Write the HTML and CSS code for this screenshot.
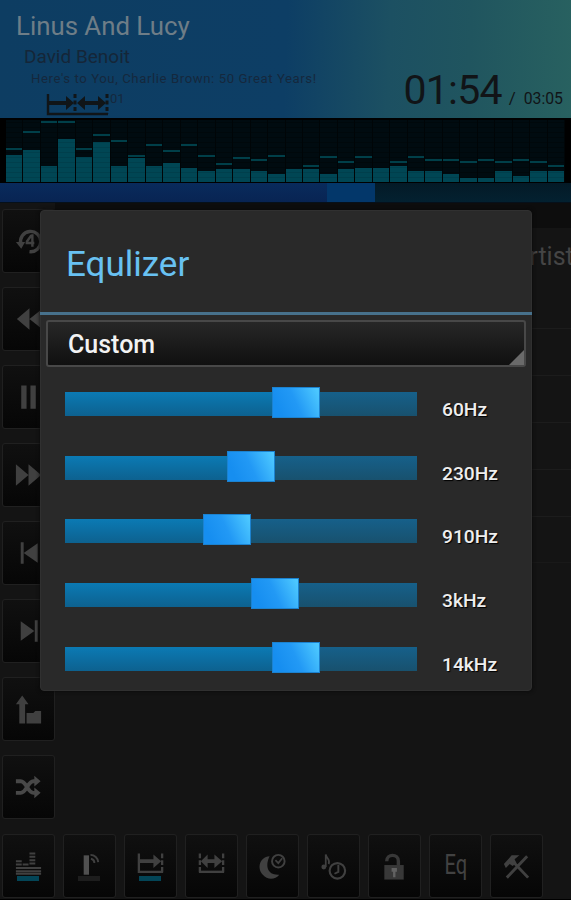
FILE: index.html
```html
<!DOCTYPE html>
<html lang="en">
<head>
    <meta charset="UTF-8">
    <meta name="viewport" content="width=device-width, initial-scale=1.0">
    <title>Equlizer</title>
    <link rel="stylesheet" href="styles.css">
</head>
<body>
    <div class="player">
        <header class="now-playing">
            <div class="track">
                <h1>Linus And Lucy</h1>
                <div class="artist">David Benoit</div>
                <div class="album">Here's to You, Charlie Brown: 50 Great Years!</div>
                <div class="modes">
                    <svg width="64" height="22" viewBox="0 0 64 22">
                        <path d="M2 0V20H62" fill="none" stroke="#101518" stroke-width="2.4"/>
                        <path d="M29 0V20M61 0V20" stroke="#101518" stroke-width="3" stroke-dasharray="4 2.5"/>
                        <path d="M3 9H22M36 9H54" stroke="#101518" stroke-width="4"/>
                        <path d="M20 2L28 9L20 16ZM39 2L31 9L39 16ZM52 2L60 9L52 16Z" fill="#101518"/>
                    </svg>
                    <span>01</span>
                </div>
            </div>
            <div class="time"><span class="current">01:54</span><span class="slash">/</span><span class="total">03:05</span></div>
        </header>
        <div class="spectrum" id="spectrum"></div>
        <div class="progress"><div class="played"></div><div class="buffer"></div></div>

        <main class="content">
            <nav class="sidebar">
                <button><svg viewBox="0 0 52 64"><path d="M18 35A10.500 10.500 0 1 1 27 43" fill="none" stroke="#404040" stroke-width="3.500"/><path d="M13 33H22.500L18.500 40Z"/><path d="M23 34H32M30 25V38M29 26L24 33" fill="none" stroke="#404040" stroke-width="2.500"/></svg></button>
                <button><svg viewBox="0 0 52 64"><path d="M27 21V43L14 32ZM41 21V43L27 32Z"/></svg></button>
                <button><svg viewBox="0 0 52 64"><path d="M18.500 20H24V44H18.500ZM28 20H33.500V44H28Z"/></svg></button>
                <button><svg viewBox="0 0 52 64"><path d="M13 21V43L26 32ZM26 21V43L39 32Z"/></svg></button>
                <button><svg viewBox="0 0 52 64"><path d="M18 21H21V43H18ZM35.500 22V42L21 32Z"/></svg></button>
                <button><svg viewBox="0 0 52 64"><path d="M18 22V42L32 32ZM32.500 21H35.500V43H32.500Z"/></svg></button>
                <button><svg viewBox="0 0 52 64"><path d="M19.500 18L26 27H22.500V47H16.500V27H13ZM24 36H31L33 34H39V47H24Z"/></svg></button>
                <button><svg viewBox="0 0 52 64"><path d="M13 26H18C24 26 25 38 31 38H35M13 38H18C24 38 25 26 31 26H35" fill="none" stroke="#484848" stroke-width="4"/><path d="M32 20.500L38.500 26L32 31.500ZM32 32.500L38.500 38L32 43.500Z" fill="#484848"/></svg></button>
            </nav>
            <section class="list">
                <div class="list-head">Artist</div>
                <div class="row"></div>
                <div class="row"></div>
                <div class="row"></div>
                <div class="row"></div>
                <div class="row"></div>
            </section>
        </main>

        <footer class="toolbar">
            <button class="on"><svg viewBox="0 0 52 64"><path d="M27 19H33M27 22.500H33M27 26H33M13 27H19M13 30.500H19M20 30.500H26M27 29.500H33M13 34H39M13 37.500H39M13 40H39" fill="none" stroke="#404040" stroke-width="2"/></svg></button>
            <button class="off"><svg viewBox="0 0 52 64"><path d="M20 21H25.500V41H20Z" fill="#505050"/><path d="M27.500 24.500A4.500 4.500 0 0 1 31 29M27 20.500A8 8 0 0 1 35 28" fill="none" stroke="#404040" stroke-width="2"/></svg></button>
            <button class="on"><svg viewBox="0 0 52 64"><path d="M14 19V38H39" fill="none" stroke="#404040" stroke-width="2.400"/><path d="M38 19V38" stroke="#404040" stroke-width="2.400" stroke-dasharray="5 2"/><path d="M14 25H29V20L37 27L29 34V29H14Z"/></svg></button>
            <button><svg viewBox="0 0 52 64"><path d="M13 38H39" stroke="#404040" stroke-width="2.400"/><path d="M14 19V38M38 19V38" stroke="#404040" stroke-width="2.400" stroke-dasharray="5 2"/><path d="M15 27L22 20V25H29V20L37 27L29 34V29H22V34Z"/></svg></button>
            <button><svg viewBox="0 0 52 64"><path d="M23 22C12 23 10 35 16 41C21 47 29 46 33 41C21 42 18 32 23 22Z"/><circle cx="32" cy="27" r="6.500" fill="none" stroke="#404040" stroke-width="2"/><path d="M29 26L32 29L36 24" fill="none" stroke="#404040" stroke-width="1.800"/></svg></button>
            <button><svg viewBox="0 0 52 64"><circle cx="16" cy="33" r="2.500"/><path d="M18 33V20C19 25 23 25 21 30" fill="none" stroke="#404040" stroke-width="1.800"/><circle cx="30" cy="37" r="8" fill="none" stroke="#404040" stroke-width="2.200"/><path d="M31 31V38L27 40" fill="none" stroke="#404040" stroke-width="2"/></svg></button>
            <button><svg viewBox="0 0 52 64"><path d="M18 27C18 19 30 19 30 27V32" fill="none" stroke="#383838" stroke-width="3.500"/><path d="M15.500 31H35.500V46H15.500Z" fill="#383838"/><path d="M23 34H28.500V38H27V43.500H24.500V38H23Z" fill="#626262"/></svg></button>
            <button><span class="eq">Eq</span></button>
            <button><svg viewBox="0 0 52 64"><path d="M16 44L37 22M22 27L38 44" fill="none" stroke="#404040" stroke-width="3"/><path d="M13 30L21 21H29L24 25L26 29L22 32L19 30L15 34Z"/></svg></button>
        </footer>

        <div class="dialog">
            <h2>Equlizer</h2>
            <div class="preset">Custom</div>
            <div class="bands" id="bands"></div>
        </div>
    </div>
    <script>
        // [bar height, peak height] per column, px from the bottom
        const levels = [
            [27, 33], [32, 50], [16, 60], [43, 60], [25, 33], [40, 47], [16, 41], [24, 26],
            [16, 37], [19, 31], [14, 37], [11, 26], [13, 18], [13, 24], [11, 22], [8, 26],
            [13, 13], [13, 16], [8, 25], [13, 20], [14, 25], [14, 14], [16, 20], [11, 25],
            [11, 22], [8, 22], [4, 20], [4, 22], [11, 20], [6, 22], [11, 20], [11, 16]
        ];

        // [label, thumb position in %]
        const bands = [
            ['60Hz', 65.5], ['230Hz', 52.8], ['910Hz', 46], ['3kHz', 59.8], ['14kHz', 65.5]
        ];

        // a peak that has fallen onto its bar is not drawn
        document.getElementById('spectrum').innerHTML = levels.map(([bar, peak]) => `
            <div class="column">
                ${peak > bar ? `<div class="peak" style="margin-bottom: ${peak - bar - 1}px"></div>` : ''}
                <div class="bar" style="height: ${bar}px"></div>
            </div>`).join('');

        document.getElementById('bands').innerHTML = bands.map(([label, pos]) => `
            <div class="band">
                <div class="slider">
                    <div class="fill" style="width: ${pos}%"></div>
                    <div class="thumb" style="left: ${pos}%"></div>
                </div>
                <span class="freq">${label}</span>
            </div>`).join('');
    </script>
</body>
</html>
```
FILE: styles.css
```css
* {
    box-sizing: border-box;
}

body {
    font-family: Roboto, "Liberation Sans", sans-serif;
    background-color: #141414;
    margin: 0;
    overflow: hidden;
}

.player {
    position: relative;
    display: flex;
    flex-direction: column;
    width: 571px;
    height: 900px;
}

.now-playing {
    display: flex;
    justify-content: space-between;
    height: 118px;
    padding: 10px 8px 0 16px;
    background: linear-gradient(92deg, #0d3d62 0%, #0d3e65 50%, #1c5062 68%, #20555f 82%, #286160 100%);
    white-space: nowrap;
}

.track {
    width: 350px;
}

h1 {
    margin: 0;
    font-size: 25.800px;
    line-height: 33px;
    font-weight: 400;
    color: #6e7d87;
}

.artist {
    padding-left: 8px;
    font-size: 19px;
    line-height: 28px;
    color: #152638;
}

.album {
    padding-left: 15px;
    font-size: 13.200px;
    line-height: 15px;
    letter-spacing: 0.570px;
    color: #15283d;
}

.modes {
    display: flex;
    padding: 8px 0 0 30px;
    font-size: 13px;
    line-height: 10px;
    color: #15283d;
}

.time {
    display: flex;
    align-items: baseline;
    padding-top: 56px;
    color: #111417;
}

.current {
    font-size: 41px;
    line-height: 48px;
    letter-spacing: -0.800px;
}

.slash {
    margin: 0 8px 0 7px;
    font-size: 17px;
}

.total {
    font-size: 15.800px;
}

.spectrum {
    display: flex;
    height: 65px;
    padding: 2px 6px 1px;
    background-color: #000;
}

.column {
    display: flex;
    flex: 1;
    flex-direction: column;
    justify-content: flex-end;
    border-right: 1px solid #000507;
    background: repeating-linear-gradient(0deg, #000b10 0, #000b10 4px, #00080b 4px, #00080b 5px);
}

.bar {
    flex-shrink: 0;
    background: repeating-linear-gradient(0deg, #004654 0, #004654 4px, #003f4c 4px, #003f4c 5px);
}

.peak {
    flex-shrink: 0;
    height: 2px;
    background-color: #003f49;
}

.progress {
    display: flex;
    height: 20px;
    border-bottom: 1px solid #06101a;
    background: linear-gradient(#041a27, #032130);
}

.played {
    width: 327px;
    background: linear-gradient(#092b5c, #082453);
}

.buffer {
    width: 48px;
    background-color: #03376a;
}

.content {
    display: flex;
    height: 631px;
}

.sidebar {
    display: flex;
    flex-direction: column;
    gap: 14px;
    padding: 6px 0 0 2px;
}

button {
    display: flex;
    flex-direction: column;
    flex-shrink: 0;
    width: 53px;
    height: 64px;
    padding: 0;
    border: 1px solid #202020;
    border-radius: 3px;
    background: linear-gradient(#101010, #060606);
    position: relative;
}

button svg {
    width: 51px;
    height: 62px;
    fill: #404040;
}

.list {
    flex: 1;
}

.list-head {
    height: 125px;
    padding: 37px 0 0 458px;
    font-size: 25px;
    line-height: 34px;
    color: #454545;
    background: linear-gradient(#0d0d0d 25px, #141414 25px);
    overflow: hidden;
}

.row {
    height: 47px;
    border-top: 1px solid #1c1c1c;
}

.row:last-child {
    border-bottom: 1px solid #191919;
}

.toolbar {
    display: flex;
    gap: 8px;
    height: 66px;
    padding-left: 2px;
    border-bottom: 1px solid #000;
}

.on::after, .off::after {
    content: "";
    position: absolute;
    left: 14px;
    top: 41px;
    width: 22px;
    height: 5px;
    background-color: #034557;
}

.off::after {
    background-color: #1d1d1d;
}

.eq {
    align-self: center;
    margin-top: 14px;
    font: 28px/32px Roboto, sans-serif;
    color: #424242;
    transform: scaleX(.72);
}

.dialog {
    position: absolute;
    left: 40px;
    top: 210px;
    width: 492px;
    height: 481px;
    border: 1px solid #303030;
    border-radius: 4px;
    background-color: #292929;
    box-shadow: 0 0 4px #080808;
}

h2 {
    height: 104px;
    margin: 0 -1px;
    padding: 33px 26px 0;
    border-bottom: 3px solid #47718c;
    font-size: 35px;
    line-height: 42px;
    font-weight: 400;
    color: #68c1f2;
}

.preset {
    position: relative;
    height: 47px;
    margin: 5px 5px 0;
    padding-left: 20px;
    border: 2px solid #484848;
    border-radius: 3px;
    background: linear-gradient(#272727, #101010);
    font-size: 25px;
    line-height: 45px;
    font-weight: 500;
    color: #f3f3f3;
}

/* dropdown corner */
.preset::after {
    content: "";
    position: absolute;
    right: 0;
    bottom: 0;
    border-left: 15px solid transparent;
    border-bottom: 15px solid #6a6a6a;
}

.bands {
    padding: 25px 0 0 24px;
}

.band {
    display: flex;
    height: 63.700px;
}

.slider {
    position: relative;
    width: 352px;
    height: 24px;
    background: linear-gradient(#16608a, #18516e);
}

.fill {
    height: 24px;
    background: linear-gradient(#0b7ab4, #0d618f);
}

.thumb {
    position: absolute;
    top: -5px;
    width: 48px;
    height: 31px;
    margin-left: -24px;
    border: 1px solid #1c82cf;
    background: linear-gradient(65deg, #168ef0 15%, #2299f5 50%, #4cc7ff 95%);
}

.freq {
    margin: 6px 0 0 25px;
    font-size: 19.200px;
    line-height: 24px;
    font-weight: 500;
    color: #eee;
    text-shadow: 1px 1px 1px #000;
}
```
